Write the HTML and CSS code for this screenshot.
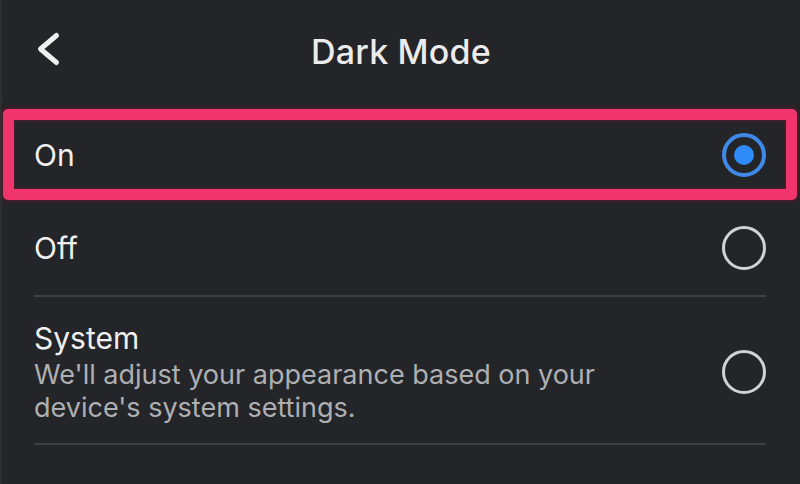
FILE: index.html
```html
<!DOCTYPE html>
<html lang="en">
<head>
<meta charset="utf-8">
<title>Dark Mode</title>
<link rel="stylesheet" href="styles.css">
</head>
<body>
<div class="screen">
  <header class="header">
    <button class="back" aria-label="Back">
      <svg width="30" height="40" viewBox="0 0 30 40">
        <polyline points="20.5,4.5 4.5,18 20.5,31.5" fill="none" stroke="#f0f0f0" stroke-width="5" stroke-linecap="round" stroke-linejoin="round"/>
      </svg>
    </button>
    <h1 class="title">Dark Mode</h1>
  </header>

  <div class="option option-highlight">
    <div class="label">
      <span class="name">On</span>
    </div>
    <span class="radio radio-on"><span class="dot"></span></span>
  </div>

  <div class="option option-plain">
    <div class="label">
      <span class="name">Off</span>
    </div>
    <span class="radio"></span>
  </div>

  <div class="option option-plain option-tall">
    <div class="label">
      <span class="name">System</span>
      <span class="desc">We'll adjust your appearance based on your<br>device's system settings.</span>
    </div>
    <span class="radio"></span>
  </div>
</div>
</body>
</html>
```

FILE: styles.css
```css
* {
  box-sizing: border-box;
}

html, body {
  margin: 0;
  padding: 0;
  background: #242528;
}

body {
  font-family: Inter, "Noto Sans", "Liberation Sans", sans-serif;
  color: #f0f0f0;
  width: 800px;
  height: 484px;
  overflow: hidden;
}

.screen {
  width: 800px;
  height: 484px;
  border-left: 2px solid #2e2f31;
}

.header {
  height: 109px;
  display: flex;
  align-items: center;
  justify-content: center;
  position: relative;
  padding-bottom: 6px;
}

.back {
  position: absolute;
  left: 34px;
  top: 31px;
  width: 30px;
  height: 40px;
  padding: 0;
  border: 0;
  background: transparent;
  display: flex;
}

.title {
  margin: 0;
  font-size: 34px;
  font-weight: 500;
  letter-spacing: 0.2px;
  color: #ececec;
  line-height: 1;
}

.option {
  display: flex;
  align-items: center;
  justify-content: space-between;
}

.option-highlight {
  margin: 0 3px 0 1px;
  height: 91px;
  border: 11px solid #f0356d;
  border-radius: 5px;
  padding: 0 20px 0 20px;
  box-shadow: 0 0 4px 1px rgba(120, 20, 50, 0.6), inset 0 0 3px 1px rgba(120, 20, 50, 0.5);
}

.option-plain {
  margin: 0 34px 0 32px;
  height: 97px;
  border-bottom: 2px solid #3e3f42;
}

.option-tall {
  height: 148px;
  padding-top: 4px;
}

.label {
  display: flex;
  flex-direction: column;
}

.name {
  font-size: 30px;
  font-weight: 400;
  line-height: 36px;
  color: #f0f0f0;
}

.desc {
  font-size: 27px;
  line-height: 33px;
  color: #aeafb2;
  margin-top: 2px;
}

.radio {
  width: 44px;
  height: 44px;
  border-radius: 50%;
  border: 3.5px solid #d2d2d4;
  display: flex;
  align-items: center;
  justify-content: center;
  flex: none;
}

.radio-on {
  border: 4px solid #3f8ae8;
}

.dot {
  width: 20px;
  height: 20px;
  border-radius: 50%;
  background: #2e8bf7;
}
```
